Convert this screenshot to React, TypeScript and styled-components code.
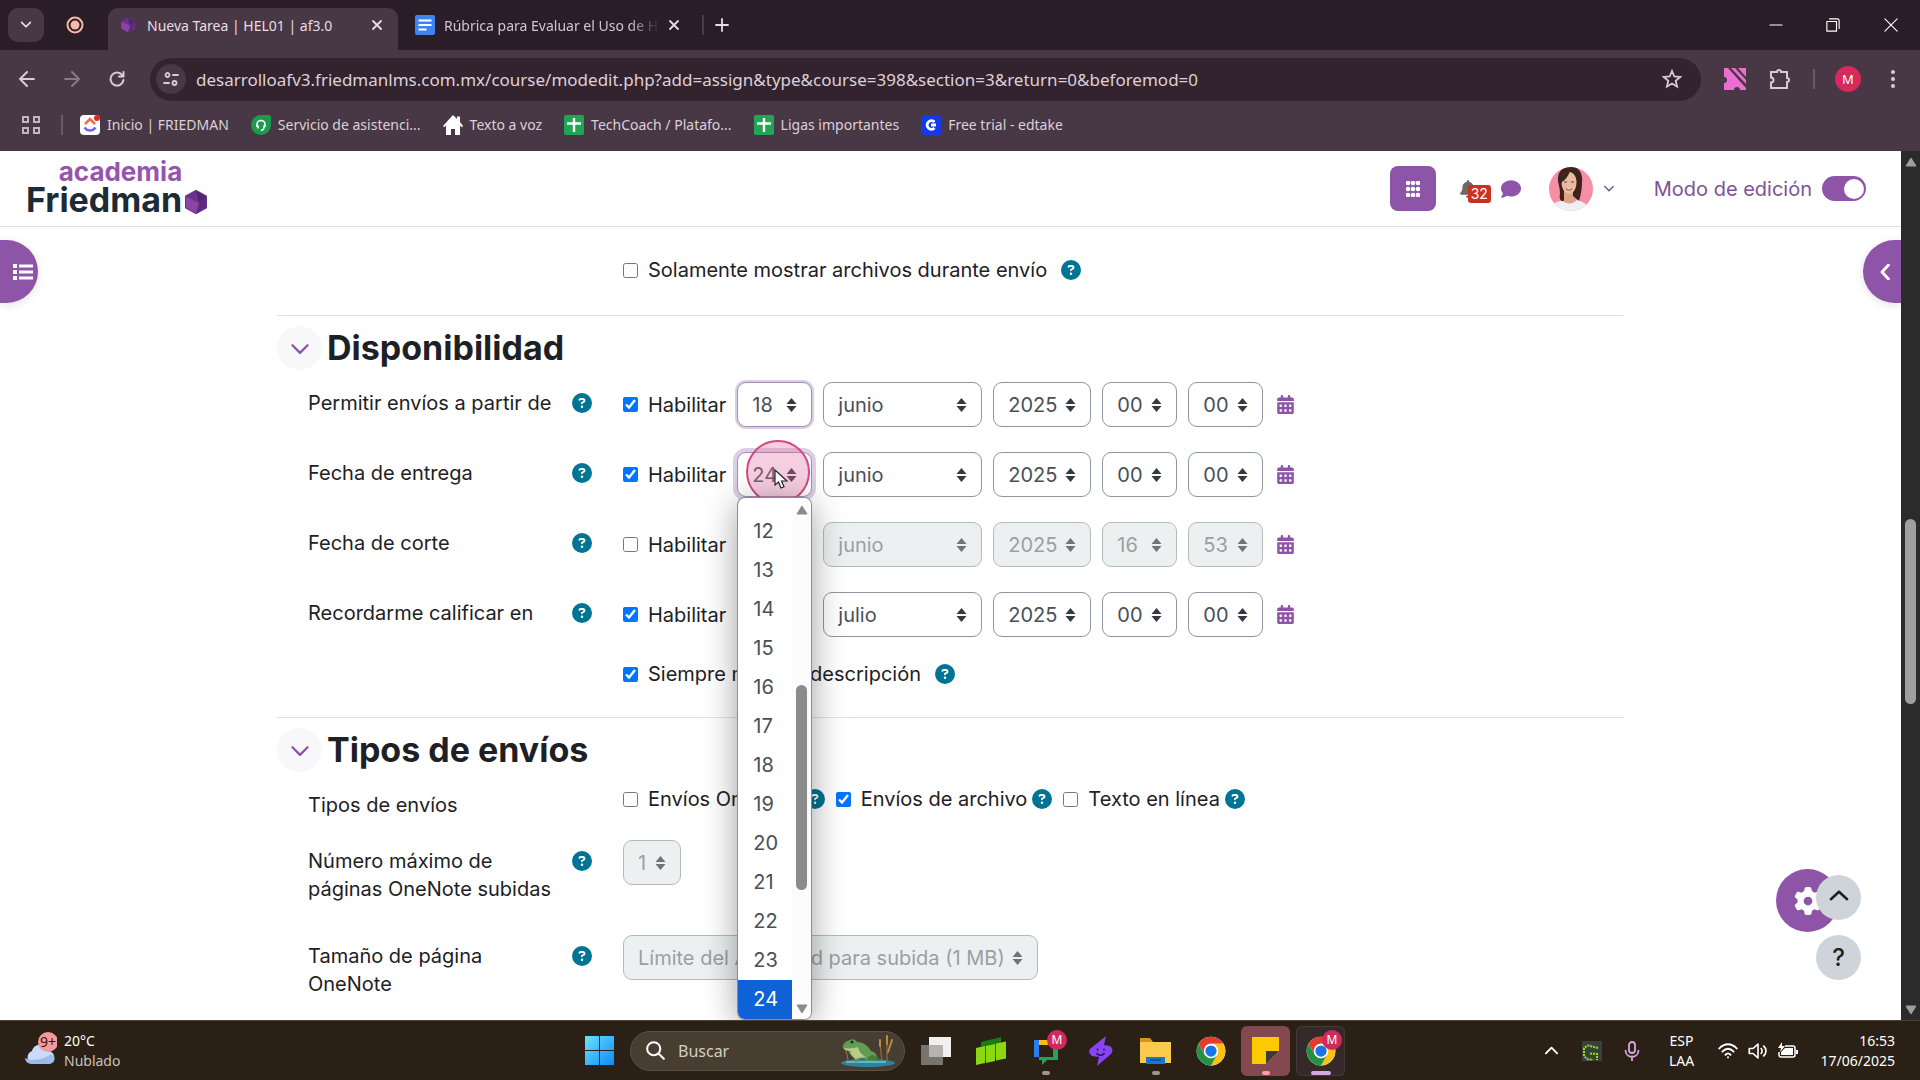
import React from "react";
import styled, { createGlobalStyle, css } from "styled-components";
import { FaBell, FaCalendarDays, FaCircleQuestion, FaComment, FaGear } from "react-icons/fa6";

const UI = `"Noto Sans", "Open Sans", sans-serif`;
const BODY = `Inter, "Open Sans", sans-serif`;
const PURPLE = "#8e54a8";
const INK = "#1d2125";

const GlobalStyle = createGlobalStyle`
  *, *::before, *::after { box-sizing: border-box; }
  body { margin: 0; background: #fff; }
  button, input, select { font: inherit; color: inherit; margin: 0; }
  button { border: 0; padding: 0; background: none; display: inline-flex; align-items: center; justify-content: center; }
  a { color: inherit; text-decoration: none; }
  svg { display: block; flex: none; }
`;

const Screen = styled.div`
  display: flex;
  flex-direction: column;
  height: 100vh;
  font-family: ${UI};
  overflow: hidden;
`;

/* ---------- browser ---------- */

const TabStrip = styled.div`
  display: flex;
  align-items: center;
  height: 50px;
  padding-left: 8px;
  background: #2b1d27;
  color: #e9dde5;
  font-size: 14px;
`;
const TabSearch = styled.button`
  width: 36px;
  height: 34px;
  border-radius: 10px;
  background: #483744;
`;
const RecordMark = styled.div`
  width: 62px;
  margin-right: 2px;
  display: flex;
  justify-content: center;
`;
const Tab = styled.div<{ $active?: boolean }>`
  display: flex;
  align-items: center;
  align-self: flex-end;
  width: 290px;
  height: 42px;
  margin-right: 7px;
  padding: 0 11px 8px 10px;
  border-radius: 10px 10px 0 0;
  background: ${(p) => (p.$active ? "#483744" : "transparent")};
`;
const Favicon = styled.span`
  display: flex;
  justify-content: center;
  width: 20px;
  margin-right: 9px;
`;
const TabTitle = styled.span<{ $fade?: boolean }>`
  flex: 1;
  min-width: 0;
  overflow: hidden;
  white-space: nowrap;
  ${(p) => p.$fade && css`
    color: #d3c5cf;
    mask-image: linear-gradient(90deg, #000 84%, transparent 98%);
  `}
`;
const IconButton = styled.button<{ $w: number }>`
  width: ${(p) => p.$w}px;
  height: 34px;
  flex: none;
  &:disabled { opacity: 0.45; }
`;
const StripDivider = styled.span`
  width: 2px;
  height: 20px;
  background: #4a3946;
`;
const WindowButtons = styled.div`
  display: flex;
  margin-left: auto;
  color: #fff;
`;

const Toolbar = styled.div`
  display: flex;
  align-items: center;
  height: 58px;
  padding: 0 15px 0 4px;
  background: #483744;
  color: #d9cad4;
`;
const Omnibox = styled.div`
  flex: 1;
  display: flex;
  align-items: center;
  gap: 10px;
  height: 43px;
  margin: 0 13px 0 10px;
  padding: 0 14px 0 6px;
  border-radius: 22px;
  background: #33232f;
`;
const SiteButton = styled.button`
  width: 30px;
  height: 30px;
  border-radius: 50%;
  background: #483744;
`;
const UrlInput = styled.input`
  flex: 1;
  min-width: 0;
  border: 0;
  padding: 0;
  outline: 0;
  background: transparent;
  color: #ddd0d9;
  font-size: 17px;
`;
const Profile = styled.button`
  width: 26px;
  height: 26px;
  margin: 0 20px;
  border-radius: 50%;
  background: #d6295c;
  color: #fff;
  font-size: 13px;
`;
const ToolDivider = styled.span`
  width: 2px;
  height: 20px;
  margin-left: 9px;
  background: #6b5866;
`;

const Bookmarks = styled.nav`
  display: flex;
  align-items: center;
  gap: 22px;
  height: 43px;
  padding: 0 22px 10px;
  background: #483744;
  color: #ddd0d9;
  font-size: 14px;
`;
const Bookmark = styled.a`
  display: flex;
  align-items: center;
  gap: 7px;
  white-space: nowrap;
`;
const BookmarkDivider = styled.span`
  width: 2px;
  height: 20px;
  margin: 0 -5px 0 -1px;
  background: #6b5866;
`;

/* ---------- web page ---------- */

const Viewport = styled.div`
  flex: 1;
  min-height: 0;
  display: flex;
  background: #fff;
`;
const Page = styled.div`
  position: relative;
  flex: 1;
  min-width: 0;
  overflow: hidden;
  color: ${INK};
  font-family: ${BODY};
  font-size: 20px;
  line-height: 28px;
`;
const ScrollTrack = styled.div`
  width: 19px;
  display: flex;
  flex-direction: column;
  align-items: center;
  padding: 6px 0 5px;
  background: #2b2b2b;
`;
const ScrollThumb = styled.div`
  width: 11px;
  height: 185px;
  border-radius: 6px;
  background: #9f9f9f;
`;
const Spacer = styled.div<{ $grow: number }>`
  flex: ${(p) => p.$grow};
`;

const Header = styled.header`
  display: flex;
  align-items: center;
  height: 76px;
  padding: 0 35px 0 26px;
  border-bottom: 1px solid #dee2e6;
`;
const Brand = styled.a`
  display: flex;
  align-items: flex-end;
  gap: 3px;
  margin-right: auto;
  padding-bottom: 2px;
`;
const BrandName = styled.span`
  display: flex;
  flex-direction: column;
  font-weight: 700;
`;
const BrandTop = styled.span`
  align-self: flex-end;
  color: #9655ad;
  font-size: 26px;
  line-height: 25px;
`;
const BrandMain = styled.span`
  color: #1c2b36;
  font-size: 34px;
  line-height: 32px;
`;
const AppsButton = styled.button`
  width: 46px;
  height: 45px;
  border-radius: 8px;
  background: ${PURPLE};
`;
const BellButton = styled.button`
  position: relative;
  width: 32px;
  height: 24px;
  margin-left: 23px;
  justify-content: flex-start;
  color: #6a6a6a;
`;
const Badge = styled.span`
  position: absolute;
  left: 9px;
  top: 8px;
  padding: 0 3px;
  border-radius: 3px;
  background: #ca3120;
  color: #fff;
  font-size: 14px;
  line-height: 18px;
`;
const ChatButton = styled.button`
  margin: 0 28px 0 10px;
  color: ${PURPLE};
`;
const UserMenu = styled.button`
  gap: 9px;
  color: #6e4a80;
`;
const EditMode = styled.label`
  display: flex;
  align-items: center;
  gap: 10px;
  margin-left: 38px;
  color: #7f5199;
`;
const Switch = styled.input`
  appearance: none;
  display: flex;
  align-items: center;
  width: 44px;
  height: 25px;
  padding: 2px;
  border-radius: 13px;
  background: ${PURPLE};
  &::after {
    content: "";
    width: 20px;
    height: 20px;
    margin-left: auto;
    border-radius: 50%;
    background: #fff;
  }
`;

const DrawerButton = styled.button<{ $side: "left" | "right" }>`
  position: absolute;
  top: 89px;
  ${(p) => p.$side}: 0;
  width: 38px;
  height: 63px;
  border-radius: ${(p) => (p.$side === "left" ? "0 32px 32px 0" : "32px 0 0 32px")};
  padding-left: 8px;
  background: ${PURPLE};
  color: #fff;
  box-shadow: 0 2px 8px rgba(0, 0, 0, 0.12);
`;
const FloatButton = styled.button<{ $size: number; $right: number; $bottom: number; $main?: boolean }>`
  position: absolute;
  right: ${(p) => p.$right}px;
  bottom: ${(p) => p.$bottom}px;
  width: ${(p) => p.$size}px;
  height: ${(p) => p.$size}px;
  border-radius: 50%;
  background: ${(p) => (p.$main ? PURPLE : "#ced4da")};
  color: ${(p) => (p.$main ? "#fff" : INK)};
  font-size: 24px;
  font-weight: 500;
`;

const Form = styled.form`
  max-width: 1347px;
  margin: 0 auto;
  padding-top: 31px;
`;
const CheckLine = styled.div<{ $end: number }>`
  display: flex;
  align-items: center;
  gap: 14px;
  height: 24px;
  margin: 0 0 ${(p) => p.$end}px 346px;
`;
const CheckLabel = styled.label`
  display: flex;
  align-items: center;
  gap: 10px;
  white-space: nowrap;
`;
const Check = styled.input.attrs({ type: "checkbox" })`
  width: 15px;
  height: 15px;
  flex: none;
  accent-color: #0075ff;
`;
const HelpButton = styled.button`
  width: 20px;
  height: 20px;
  color: #007494;
`;

const Section = styled.section`
  border-top: 1px solid #dee2e6;
  padding-top: 10px;
`;
const SectionHead = styled.div`
  display: flex;
  align-items: center;
  gap: 5px;
  margin-bottom: 12px;
`;
const Collapse = styled.button`
  width: 45px;
  height: 44px;
  border-radius: 50%;
  background: #f8f7fa;
  color: ${PURPLE};
`;
const SectionTitle = styled.h3`
  margin: 0;
  font-size: 34px;
  line-height: 44px;
  font-weight: 700;
`;
const Row = styled.div<{ $gap?: number }>`
  display: grid;
  grid-template-columns: 264px 51px 1fr;
  align-items: start;
  padding-left: 31px;
  margin-bottom: ${(p) => p.$gap ?? 25}px;
`;
const RowLabel = styled.div`
  padding: 7px 12px 7px 0;
`;
const RowHelp = styled.div`
  display: flex;
  padding-top: 11px;
`;
const Fields = styled.div`
  display: flex;
  align-items: center;
  gap: 11px;
  min-height: 45px;
`;
const TypeFields = styled.div`
  display: flex;
  align-items: center;
  gap: 11px;
  height: 30px;
`;
const TypeField = styled.div`
  display: flex;
  align-items: center;
  gap: 5px;
`;

const SelectWrap = styled.span<{ $w: number }>`
  position: relative;
  display: grid;
  width: ${(p) => p.$w}px;
  align-items: center;
  > select, > svg { grid-area: 1 / 1; }
  > svg { justify-self: end; margin-right: 15px; pointer-events: none; }
`;
const Select = styled.select<{ $ring?: number }>`
  appearance: none;
  width: 100%;
  height: 45px;
  padding: 0 0 0 14px;
  border: 1px solid #8f959e;
  border-radius: 9px;
  background: #fff;
  color: #495057;
  ${(p) => p.$ring && css`
    border-color: #a58cb5;
    box-shadow: 0 0 0 ${p.$ring}px #dccfe5;
  `}
  &:disabled {
    background: #ecf0f1;
    border-color: #b5babd;
    color: #9a9fa3;
    opacity: 1;
  }
`;
const CalendarButton = styled.button`
  margin-left: 2px;
  color: ${PURPLE};
`;

const Popup = styled.div`
  position: absolute;
  z-index: 3;
  top: 46px;
  left: 1px;
  display: flex;
  width: 73px;
  height: 521px;
  border-radius: 7px;
  overflow: hidden;
  background: #fff;
  box-shadow: 0 0 0 1px #8c8c8c, 0 6px 34px rgba(0, 0, 0, 0.4);
`;
const OptionList = styled.ul`
  flex: 1;
  display: flex;
  flex-direction: column;
  justify-content: flex-end;
  margin: 0;
  padding: 0;
  list-style: none;
`;
const Option = styled.li<{ $on?: boolean }>`
  padding-left: 15px;
  line-height: 39px;
  color: ${(p) => (p.$on ? "#fff" : "#495057")};
  background: ${(p) => (p.$on ? "#0f62d6" : "transparent")};
`;
const PopupScroll = styled.div`
  width: 19px;
  display: flex;
  flex-direction: column;
  align-items: center;
  padding: 7px 0 5px;
  background: #fcfcfc;
`;
const PopupThumb = styled.div`
  width: 11px;
  height: 205px;
  border-radius: 6px;
  background: #8b8b8b;
`;
const ClickHalo = styled.span`
  position: absolute;
  z-index: 2;
  left: 9px;
  top: -12px;
  width: 64px;
  height: 64px;
  border: 2px solid #d04a86;
  border-radius: 50%;
  background: rgba(226, 110, 160, 0.34);
  pointer-events: none;
`;
const Pointer = styled.svg`
  position: absolute;
  z-index: 4;
  left: 37px;
  top: 17px;
`;

/* ---------- taskbar ---------- */

const Taskbar = styled.footer`
  display: grid;
  grid-template-columns: 1fr auto 1fr;
  align-items: center;
  height: 60px;
  background: #2a2016;
  border-top: 1px solid #4a4238;
  color: #fff;
  font-size: 14px;
  line-height: 20px;
`;
const Weather = styled.button`
  justify-self: start;
  gap: 7px;
  padding-left: 24px;
  text-align: left;
`;
const Muted = styled.span`
  color: #c9c3bb;
`;
const Stack = styled.span`
  display: grid;
`;
const Apps = styled.div`
  display: flex;
  align-items: center;
`;
const AppButton = styled.button<{ $tone?: "note" | "active"; $mark?: string; $markWidth?: number }>`
  position: relative;
  width: 49px;
  height: 50px;
  margin: 0 3px;
  border-radius: 6px;
  ${(p) => p.$tone === "note" && css`background: #834850;`}
  ${(p) => p.$tone === "active" && css`background: #35292a; box-shadow: inset 0 0 0 1px #443a3a;`}
  &::after {
    content: "";
    position: absolute;
    bottom: 1px;
    left: 50%;
    width: ${(p) => p.$markWidth ?? 8}px;
    height: 4px;
    border-radius: 2px;
    transform: translateX(-50%);
    background: ${(p) => p.$mark ?? "transparent"};
  }
`;
const AppBadge = styled.span`
  position: absolute;
  top: 4px;
  right: 3px;
  width: 20px;
  height: 20px;
  border-radius: 50%;
  background: #cf2a5c;
  color: #fff;
  font-size: 12px;
  line-height: 20px;
  text-align: center;
`;
const SearchBox = styled.label`
  display: flex;
  align-items: center;
  gap: 13px;
  width: 275px;
  height: 40px;
  margin: 0 3px;
  padding: 0 8px 0 15px;
  border: 1px solid #5b5145;
  border-radius: 20px;
  background: #483d31;
`;
const SearchInput = styled.input`
  flex: 1;
  min-width: 0;
  border: 0;
  outline: 0;
  padding: 0;
  background: transparent;
  font-size: 16px;
  &::placeholder { color: #d4cec6; opacity: 1; }
`;
const Tray = styled.div`
  justify-self: end;
  display: flex;
  align-items: center;
  padding-right: 25px;
`;
const Lang = styled.button`
  width: 60px;
  margin: 0 1px 0 5px;
`;
const TrayIcon = styled.button<{ $w: number }>`
  width: ${(p) => p.$w}px;
  height: 40px;
`;
const Clock = styled.button`
  margin-left: 18px;
  text-align: right;
`;

/* ---------- drawings ---------- */

const Line = ({ d, size = 16, w = 2, box = 16 }: { d: string; size?: number; w?: number; box?: number }) => (
  <svg width={size} height={size} viewBox={`0 0 ${box} ${box}`} fill="none" stroke="currentColor" strokeWidth={w} strokeLinecap="round" strokeLinejoin="round">
    <path d={d} />
  </svg>
);
const Close = () => <Line size={12} box={12} w={1.8} d="M2 2l8 8M10 2l-8 8" />;
const Hexagon = ({ w, h }: { w: number; h: number }) => (
  <svg width={w} height={h} viewBox="0 0 22 24">
    <path d="M11 1l10 5.500v11L11 23 1 17.500v-11z" fill="#6b3289" stroke="#6b3289" strokeWidth="2" strokeLinejoin="round" />
    <path d="M11 1l10 5.500-7 6.500z" fill="#4f2570" />
    <path d="M21 6.500v11L11 23l3-10z" fill="#5d2b80" />
    <path d="M1 6.500L14 13l-3 10-10-5.500z" fill="#8b45a3" />
  </svg>
);
const Sheets = () => (
  <svg width="20" height="20" viewBox="0 0 20 20">
    <rect width="20" height="20" rx="2" fill="#23a455" />
    <path d="M10 3v14M3 8.500h14" stroke="#fff" strokeWidth="2.400" />
  </svg>
);
const Arrows = ({ dim }: { dim?: boolean }) => (
  <svg width="11" height="14" viewBox="0 0 11 14" fill={dim ? "#6f7477" : "#343a40"}>
    <path d="M5.500 0l5 6h-10zM5.500 14l5-6h-10z" />
  </svg>
);
const Tri = ({ up, color }: { up?: boolean; color: string }) => (
  <svg width="12" height="10" viewBox="0 0 12 10">
    <path d={up ? "M6 1l5 8H1z" : "M6 9l5-8H1z"} fill={color} stroke={color} strokeLinejoin="round" />
  </svg>
);
const Chrome = () => (
  <svg width="30" height="30" viewBox="0 0 48 48">
    <circle cx="24" cy="24" r="23" fill="#fff" />
    <path d="M4.100 12.500A23 23 0 0 1 43.900 12.500H24A11.500 11.500 0 0 0 14 18.200L14 29.700z" fill="#e33b2e" />
    <path d="M43.900 12.500A23 23 0 0 1 24 47L34 29.700A11.500 11.500 0 0 0 24 12.500z" fill="#fbc116" />
    <path d="M24 47A23 23 0 0 1 4.100 12.500L14 29.700A11.500 11.500 0 0 0 34 29.700z" fill="#229342" />
    <circle cx="24" cy="24" r="11.500" fill="#fff" />
    <circle cx="24" cy="24" r="9" fill="#1a73e8" />
  </svg>
);
const Portrait = () => (
  <svg width="44" height="44" viewBox="0 0 44 44">
    <defs><clipPath id="face"><circle cx="22" cy="22" r="22" /></clipPath></defs>
    <g clipPath="url(#face)">
      <path d="M0 0h44v44H0z" fill="#f58fa5" />
      <path d="M9 14C8 3 16-1 22 0c8-1 12 7 11 15 0 6-1 13-3 19l-6-5-9 5c-4 1-5-3-4-7 0-5-1-8-2-13z" fill="#3d231c" />
      <path d="M15 23h9v10l4 4-8 5-8-5 3-4z" fill="#dba486" />
      <path d="M12.500 15C12.500 8 16 5 20 5s7.500 4 7.500 10c0 6-3 12-7.500 12s-7.500-6-7.500-12z" fill="#eabb9e" />
      <path d="M11 18c0-8 3-13 10-14-2 6-5 9-8 11zM19 4c6 0 9 6 10 14 2-5 1-12-2-15z" fill="#3d231c" />
      <path d="M15 15h3M22 15h3" stroke="#5b3a2e" strokeWidth="1.100" />
      <path d="M17 21.500c2 1.800 4 1.800 6 0" stroke="#bd5a5c" strokeWidth="1.200" fill="#fff" />
      <path d="M2 44c1-8 6-10 11-10 5 3 10 4 15-1 6 2 11 4 13 11z" fill="#eff0f3" />
    </g>
  </svg>
);
const Frog = () => (
  <svg width="56" height="34" viewBox="0 0 56 34">
    <ellipse cx="28" cy="29" rx="27" ry="4" fill="#2d84a0" />
    <path d="M6 28h40" stroke="#75c5d8" strokeWidth="1.500" />
    <path d="M47 27V5M42 27l-2-18M8 26L5 12" stroke="#8b6c35" strokeWidth="1.300" />
    <path d="M47 2v8M40 6v6M52 6l-4 12" stroke="#b98c43" strokeWidth="2" strokeLinecap="round" />
    <path d="M3 12c1-4 4-5 7-6 3-2 6 0 7 2 7 0 11 4 14 9 5 1 8 6 5 10h-9c-2-3-5-3-8-2l-1 3h-4l1-5c-5-2-7-4-6-7-4 0-7-1-6-4z" fill="#629c55" />
    <path d="M4 14c5 1 11 0 14-1 1 5 4 8 8 10-4 1-7 0-10 2-4-2-6-5-5-8-4 0-7-1-7-3z" fill="#b9cc83" />
    <circle cx="12" cy="8" r="1.500" fill="#1d2c17" />
    <path d="M27 26c1-5 6-6 10-3l4 4z" fill="#427c42" />
  </svg>
);

/* ---------- parts ---------- */

const Help = () => (
  <HelpButton type="button" aria-label="Ayuda"><FaCircleQuestion size={20} /></HelpButton>
);

type PickProps = { value: string; w: number; name: string; disabled?: boolean; ring?: number; children?: React.ReactNode };
const Pick = ({ value, w, name, disabled, ring, children }: PickProps) => (
  <SelectWrap $w={w}>
    <Select aria-label={name} defaultValue={value} disabled={disabled} $ring={ring}>
      <option value={value}>{value}</option>
    </Select>
    <Arrows dim={disabled} />
    {children}
  </SelectWrap>
);

const DayPopup = () => (
  <Popup>
    <OptionList role="listbox" aria-label="Día">
      {Array.from({ length: 13 }, (_, i) => i + 12).map((n) => (
        <Option key={n} role="option" aria-selected={n === 24} $on={n === 24}>{n}</Option>
      ))}
    </OptionList>
    <PopupScroll>
      <Tri up color="#8b8b8b" />
      <Spacer $grow={170} />
      <PopupThumb />
      <Spacer $grow={114} />
      <Tri color="#8b8b8b" />
    </PopupScroll>
  </Popup>
);

const dates = [
  { label: "Permitir envíos a partir de", on: true, day: "18", month: "junio", hour: "00", minute: "00", ring: 2 },
  { label: "Fecha de entrega", on: true, day: "24", month: "junio", hour: "00", minute: "00", ring: 4, open: true },
  { label: "Fecha de corte", on: false, day: "17", month: "junio", hour: "16", minute: "53" },
  { label: "Recordarme calificar en", on: true, day: "1", month: "julio", hour: "00", minute: "00" },
];

const bookmarks = [
  { text: "Inicio | FRIEDMAN", icon: (
    <svg width="20" height="20" viewBox="0 0 20 20"><rect width="20" height="20" rx="4" fill="#fff" />
      <path d="M5 9l5-5 5 5" stroke="#f26a4b" strokeWidth="2.500" fill="none" /><path d="M4.500 12.500c3 4 8 4 11 0" stroke="#6f63f5" strokeWidth="2.500" fill="none" />
      <circle cx="17" cy="3" r="3" fill="#e5281e" /></svg>) },
  { text: "Servicio de asistenci...", icon: (
    <svg width="20" height="20" viewBox="0 0 20 20"><path d="M10 0h8a2 2 0 0 1 2 2v8A10 10 0 1 1 10 0z" fill="#1c9b4f" />
      <path d="M6 12V9.500a4 4 0 0 1 8 0V12M7 10.500v3M13 10.500v3M13 14l-3 1.500" stroke="#fff" strokeWidth="1.600" fill="none" /></svg>) },
  { text: "Texto a voz", icon: (
    <svg width="20" height="20" viewBox="0 0 20 20"><path d="M10 0l4 4V1.500h3V7l3 4-1.200 1.200L17 10.500V20h-5v-6H8v6H3v-9.500l-1.800 1.700L0 11z" fill="#fff" /></svg>) },
  { text: "TechCoach / Platafo...", icon: <Sheets /> },
  { text: "Ligas importantes", icon: <Sheets /> },
  { text: "Free trial - edtake", icon: (
    <svg width="20" height="20" viewBox="0 0 20 20"><rect width="20" height="20" rx="3" fill="#123be8" />
      <path d="M13.500 7A4.300 4.300 0 1 0 13.500 13M10 10h5" stroke="#fff" strokeWidth="2.800" fill="none" /></svg>) },
];

export default function App() {
  return (
    <Screen>
      <GlobalStyle />
      <TabStrip>
        <TabSearch aria-label="Buscar pestañas"><Line size={14} d="M3 5l5 5 5-5" /></TabSearch>
        <RecordMark>
          <svg width="18" height="18" viewBox="0 0 18 18"><circle cx="9" cy="9" r="7.500" fill="none" stroke="#f6b9a9" strokeWidth="2" /><circle cx="9" cy="9" r="4.500" fill="#f6b9a9" /></svg>
        </RecordMark>
        <Tab $active>
          <Favicon><Hexagon w={14} h={16} /></Favicon>
          <TabTitle>Nueva Tarea | HEL01 | af3.0</TabTitle>
          <IconButton $w={20} aria-label="Cerrar"><Close /></IconButton>
        </Tab>
        <Tab>
          <Favicon><svg width="20" height="20" viewBox="0 0 20 20"><rect width="20" height="20" rx="2" fill="#3f83f2" /><path d="M3.500 5.500h13M3.500 10h13M3.500 14.500h8" stroke="#fff" strokeWidth="2" /></svg></Favicon>
          <TabTitle $fade>Rúbrica para Evaluar el Uso de H</TabTitle>
          <IconButton $w={20} aria-label="Cerrar"><Close /></IconButton>
        </Tab>
        <StripDivider />
        <IconButton $w={36} aria-label="Nueva pestaña"><Line w={1.800} d="M8 2v12M2 8h12" /></IconButton>
        <WindowButtons>
          <IconButton $w={56} aria-label="Minimizar"><Line size={14} w={1.200} d="M1 8h14" /></IconButton>
          <IconButton $w={58} aria-label="Restaurar"><Line size={14} w={1.300} d="M1 4h11v11H1zM4 1h9a2 2 0 0 1 2 2v9" /></IconButton>
          <IconButton $w={58} aria-label="Cerrar ventana"><Line size={14} w={1.300} d="M1 1l14 14M15 1L1 15" /></IconButton>
        </WindowButtons>
      </TabStrip>
      <Toolbar>
        <IconButton $w={46} aria-label="Atrás"><Line d="M15 8H1M8 1L1 8l7 7" /></IconButton>
        <IconButton $w={44} aria-label="Adelante" disabled><Line d="M1 8h14M8 1l7 7-7 7" /></IconButton>
        <IconButton $w={46} aria-label="Recargar"><Line d="M13.500 4.500A6.500 6.500 0 1 0 14.500 9M14.500 1v4.500H10" /></IconButton>
        <Omnibox>
          <SiteButton aria-label="Información del sitio"><Line w={1.800} d="M2.500 4a2 2 0 1 0 4 0 2 2 0 1 0-4 0M10 4h5M1 12h5M9.500 12a2 2 0 1 0 4 0 2 2 0 1 0-4 0" /></SiteButton>
          <UrlInput aria-label="Dirección" defaultValue="desarrolloafv3.friedmanlms.com.mx/course/modedit.php?add=assign&type&course=398&section=3&return=0&beforemod=0" />
          <IconButton $w={30} aria-label="Favorito">
            <svg width="20" height="20" viewBox="0 0 20 20" fill="none" stroke="currentColor" strokeWidth="1.800"><path d="M10 2l2.300 5.500 5.900.500-4.500 3.900 1.400 5.800L10 14.600l-5.100 3.100 1.400-5.800L1.800 8l5.900-.500z" /></svg>
          </IconButton>
        </Omnibox>
        <IconButton $w={42} aria-label="Extensión">
          <svg width="22" height="22" viewBox="0 0 22 22" fill="#ea6fd0"><path d="M0 0h4l18 20v2h-6a3 3 0 0 0-6 0H0v-7a3 3 0 0 0 0-6z" /><path d="M7 0h4l11 12v4zM14 0h8v9z" /></svg>
        </IconButton>
        <IconButton $w={48} aria-label="Extensiones">
          <svg width="22" height="22" viewBox="0 0 22 22" fill="none" stroke="currentColor" strokeWidth="2"><path d="M2 4h6a2 2 0 0 1 4 0h6v6a2 2 0 0 1 0 4v6H2v-5.500a2.500 2.500 0 0 0 0-5z" /></svg>
        </IconButton>
        <ToolDivider />
        <Profile>M</Profile>
        <IconButton $w={24} aria-label="Menú"><svg width="6" height="20" viewBox="0 0 6 20" fill="currentColor"><circle cx="3" cy="3" r="2" /><circle cx="3" cy="10" r="2" /><circle cx="3" cy="17" r="2" /></svg></IconButton>
      </Toolbar>
      <Bookmarks>
        <svg width="18" height="18" viewBox="0 0 18 18" fill="none" stroke="#c4b4bf" strokeWidth="2"><path d="M1 1h5v5H1zM12 1h5v5h-5zM1 12h5v5H1zM12 12h5v5h-5z" /></svg>
        <BookmarkDivider />
        {bookmarks.map((b) => <Bookmark key={b.text} href="#">{b.icon}{b.text}</Bookmark>)}
      </Bookmarks>

      <Viewport>
        <Page>
          <Header>
            <Brand href="#">
              <BrandName>
                <BrandTop>academia</BrandTop>
                <BrandMain>Friedman</BrandMain>
              </BrandName>
              <Hexagon w={22} h={28} />
            </Brand>
            <AppsButton aria-label="Aplicaciones">
              <svg width="14" height="16" viewBox="0 0 14 16" fill="#fff">
                {[2, 8, 14].map((y) => [2, 7, 12].map((x) => <circle key={`${x}-${y}`} cx={x} cy={y} r="2.300" />))}
              </svg>
            </AppsButton>
            <BellButton aria-label="Notificaciones"><FaBell size={18} /><Badge>32</Badge></BellButton>
            <ChatButton aria-label="Mensajes"><FaComment size={20} /></ChatButton>
            <UserMenu aria-label="Menú de usuario"><Portrait /><Line size={14} w={1.600} d="M3 5l5 5 5-5" /></UserMenu>
            <EditMode>Modo de edición<Switch type="checkbox" role="switch" defaultChecked /></EditMode>
          </Header>

          <Form>
            <CheckLine $end={33}>
              <CheckLabel><Check />Solamente mostrar archivos durante envío</CheckLabel>
              <Help />
            </CheckLine>

            <Section>
              <SectionHead>
                <Collapse type="button" aria-label="Contraer"><Line size={22} w={1.700} d="M2.500 6L8 11.500 13.500 6" /></Collapse>
                <SectionTitle>Disponibilidad</SectionTitle>
              </SectionHead>
              {dates.map((d) => (
                <Row key={d.label}>
                  <RowLabel>{d.label}</RowLabel>
                  <RowHelp><Help /></RowHelp>
                  <Fields>
                    <CheckLabel><Check defaultChecked={d.on} />Habilitar</CheckLabel>
                    <Pick name="Día" value={d.day} w={75} disabled={!d.on} ring={d.ring}>
                      {d.open && (
                        <>
                          <ClickHalo />
                          <DayPopup />
                          <Pointer width="14" height="21" viewBox="0 0 14 21"><path d="M1 1v15l3.500-3 2.500 6 3-1.300-2.500-5.700H13z" fill="#fff" stroke="#222" strokeWidth="1.200" /></Pointer>
                        </>
                      )}
                    </Pick>
                    <Pick name="Mes" value={d.month} w={159} disabled={!d.on} />
                    <Pick name="Año" value="2025" w={98} disabled={!d.on} />
                    <Pick name="Hora" value={d.hour} w={75} disabled={!d.on} />
                    <Pick name="Minuto" value={d.minute} w={75} disabled={!d.on} />
                    <CalendarButton type="button" aria-label="Calendario"><FaCalendarDays size={19} /></CalendarButton>
                  </Fields>
                </Row>
              ))}
              <CheckLine $end={31}>
                <CheckLabel><Check defaultChecked />Siempre mostrar descripción</CheckLabel>
                <Help />
              </CheckLine>
            </Section>

            <Section>
              <SectionHead>
                <Collapse type="button" aria-label="Contraer"><Line size={22} w={1.700} d="M2.500 6L8 11.500 13.500 6" /></Collapse>
                <SectionTitle>Tipos de envíos</SectionTitle>
              </SectionHead>
              <Row $gap={14}>
                <RowLabel>Tipos de envíos</RowLabel>
                <RowHelp />
                <TypeFields>
                  <TypeField><CheckLabel><Check />Envíos OneNote</CheckLabel><Help /></TypeField>
                  <TypeField><CheckLabel><Check defaultChecked />Envíos de archivo</CheckLabel><Help /></TypeField>
                  <TypeField><CheckLabel><Check />Texto en línea</CheckLabel><Help /></TypeField>
                </TypeFields>
              </Row>
              <Row>
                <RowLabel>Número máximo de páginas OneNote subidas</RowLabel>
                <RowHelp><Help /></RowHelp>
                <Fields><Pick name="Número máximo de páginas OneNote subidas" value="1" w={58} disabled /></Fields>
              </Row>
              <Row>
                <RowLabel>Tamaño de página OneNote</RowLabel>
                <RowHelp><Help /></RowHelp>
                <Fields><Pick name="Tamaño de página OneNote" value="Límite del Actividad para subida (1 MB)" w={415} disabled /></Fields>
              </Row>
            </Section>
          </Form>

          <DrawerButton $side="left" aria-label="Índice del curso">
            <svg width="20" height="16" viewBox="0 0 20 16" fill="#fff"><path d="M0 0h4v4H0zM0 6h4v4H0zM0 12h4v4H0zM6 .5h14v3H6zM6 6.500h14v3H6zM6 12.500h14v3H6z" /></svg>
          </DrawerButton>
          <DrawerButton $side="right" aria-label="Abrir bloques"><Line w={2.800} d="M10.500 1L4 8l6.500 7" /></DrawerButton>
          <FloatButton $main $size={63} $right={62} $bottom={88} aria-label="Ajustes"><FaGear size={28} /></FloatButton>
          <FloatButton $size={45} $right={40} $bottom={100} aria-label="Subir"><Line size={20} w={2} d="M1.500 9L8 3l6.500 6" /></FloatButton>
          <FloatButton $size={45} $right={40} $bottom={40} aria-label="Ayuda">?</FloatButton>
        </Page>
        <ScrollTrack>
          <Tri up color="#9f9f9f" />
          <Spacer $grow={352} />
          <ScrollThumb />
          <Spacer $grow={301} />
          <Tri color="#9f9f9f" />
        </ScrollTrack>
      </Viewport>

      <Taskbar>
        <Weather>
          <svg width="33" height="40" viewBox="0 0 33 40"><path d="M8 33a7 7 0 0 1 0-13C10 12 22 11 24 20c8 0 9 13 0 13z" fill="#c8dcf8" /><path d="M8 33c-4 0-7-3-7-6 6 4 20 1 26-4 6 3 4 10-3 10z" fill="#9dbcec" /><circle cx="24" cy="11" r="10" fill="#f59a9b" /><text x="24" y="16" textAnchor="middle" fontSize="14" fill="#3a1414">9+</text></svg>
          <Stack><span>20°C</span><Muted>Nublado</Muted></Stack>
        </Weather>
        <Apps>
          <AppButton aria-label="Inicio">
            <svg width="29" height="29" viewBox="0 0 29 29"><defs><linearGradient id="win" x2="1" y2="1"><stop stopColor="#6fe0ff" /><stop offset="1" stopColor="#0a8cf5" /></linearGradient></defs><path d="M0 0h14v14H0zM15 0h14v14H15zM0 15h14v14H0zM15 15h14v14H15z" fill="url(#win)" /></svg>
          </AppButton>
          <SearchBox>
            <Line size={19} w={1.700} d="M12 6.500a5.500 5.500 0 1 1-11 0 5.500 5.500 0 1 1 11 0M10.500 10.500L15 15" />
            <SearchInput placeholder="Buscar" aria-label="Buscar" />
            <Frog />
          </SearchBox>
          <AppButton aria-label="Vista de tareas"><svg width="30" height="28" viewBox="0 0 30 28"><path d="M0 8h22v20H0z" fill="#77736f" /><path d="M8 0h22v20H8z" fill="#f0f0f0" /><path d="M8 8h14v12H8z" fill="#b5b2b0" /></svg></AppButton>
          <AppButton aria-label="Tablero"><svg width="30" height="28" viewBox="0 0 30 28"><path d="M5 5L25 0v20L5 25z" fill="#1a7b14" /><path d="M0 11l9-2v17l-9 2zM10 9l9-2v17l-9 2zM20 6.500l10-2v17l-10 2z" fill="#8bd712" /></svg></AppButton>
          <AppButton aria-label="Chat" $mark="#9c958c">
            <svg width="24" height="28" viewBox="0 0 24 28"><path d="M0 3h5v17H0z" fill="#2c7df0" /><path d="M5 3h14v5H5z" fill="#f9bb1a" /><path d="M5 20h14V12h5v11H13l-5 5v-5H5z" fill="#21a35a" /></svg>
            <AppBadge>M</AppBadge>
          </AppButton>
          <AppButton aria-label="Rayo"><svg width="24" height="30" viewBox="0 0 24 30"><path d="M17 0L15 9l6 1c3 2 3 6 1 8L8 30l2-9-7-1c-3-2-4-6-1-8z" fill="#8644f5" /><path d="M8.500 12.500v2M15 12.500v2M7.500 17c2 3 6 3 8 0" stroke="#2e1260" strokeWidth="1.500" fill="none" /></svg></AppButton>
          <AppButton aria-label="Explorador" $mark="#9c958c"><svg width="31" height="28" viewBox="0 0 31 28"><path d="M0 1h10l3 4h18v10H0z" fill="#d99517" /><path d="M0 5h31v21H0z" fill="#fbc94b" /><path d="M6 20h19v7H6z" fill="#1877cf" /><path d="M10 23h11" stroke="#0b4a8c" strokeWidth="1.500" /></svg></AppButton>
          <AppButton aria-label="Chrome"><Chrome /></AppButton>
          <AppButton aria-label="Notas" $tone="note" $mark="#f7a0a5"><svg width="27" height="27" viewBox="0 0 27 27"><path d="M0 0h27v14L14 27H0z" fill="#fdc900" /><path d="M14 14h13L14 27z" fill="#3b3a39" /></svg></AppButton>
          <AppButton aria-label="Chrome activo" $tone="active" $mark="#d8a6e4" $markWidth={20}><Chrome /><AppBadge>M</AppBadge></AppButton>
        </Apps>
        <Tray>
          <TrayIcon $w={30} aria-label="Iconos ocultos"><Line size={15} d="M2 11l6-6 6 6" /></TrayIcon>
          <TrayIcon $w={50} aria-label="Camtasia"><svg width="20" height="20" viewBox="0 0 20 20"><path d="M0 0h20v20H0z" fill="#3b3f3c" /><path d="M16 7L6 4.500 2 7v8l4 3.500h5M8 12.500l7 .500v6" stroke="#8de01d" strokeWidth="2" strokeDasharray="2 1" fill="none" /></svg></TrayIcon>
          <TrayIcon $w={30} aria-label="Micrófono"><svg width="16" height="20" viewBox="0 0 16 20" fill="none" stroke="#d6a6dc" strokeWidth="1.800"><rect x="5" y="1" width="6" height="11" rx="3" /><path d="M1.500 9c0 9 13 9 13 0M8 16v4" /></svg></TrayIcon>
          <Lang aria-label="Idioma"><Stack><span>ESP</span><span>LAA</span></Stack></Lang>
          <TrayIcon $w={30} aria-label="Red"><Line size={20} w={1.500} d="M1 6c4-4.500 10-4.500 14 0M3.500 8.500c3-3 6-3 9 0M6 11c1.500-1.500 2.500-1.500 4 0M8 13v.100" /></TrayIcon>
          <TrayIcon $w={30} aria-label="Volumen"><Line size={20} w={1.300} d="M1 6v4h3l4 3.500v-11L4 6zM10.500 6c1 1 1 3 0 4M12.500 4c2.500 2 2.500 6 0 8" /></TrayIcon>
          <TrayIcon $w={30} aria-label="Batería"><svg width="20" height="18" viewBox="0 0 20 18"><path d="M7 4h8a2 2 0 0 1 2 2v7a2 2 0 0 1-2 2H3a2 2 0 0 1-2-2v-3" fill="none" stroke="#fff" strokeWidth="1.500" /><path d="M7 6h8v7H3v-3zM18 8h2v4h-2zM4 0L0 6h3l-1 4 5-6H4z" fill="#fff" /></svg></TrayIcon>
          <Clock aria-label="Reloj"><Stack><span>16:53</span><span>17/06/2025</span></Stack></Clock>
        </Tray>
      </Taskbar>
    </Screen>
  );
}
